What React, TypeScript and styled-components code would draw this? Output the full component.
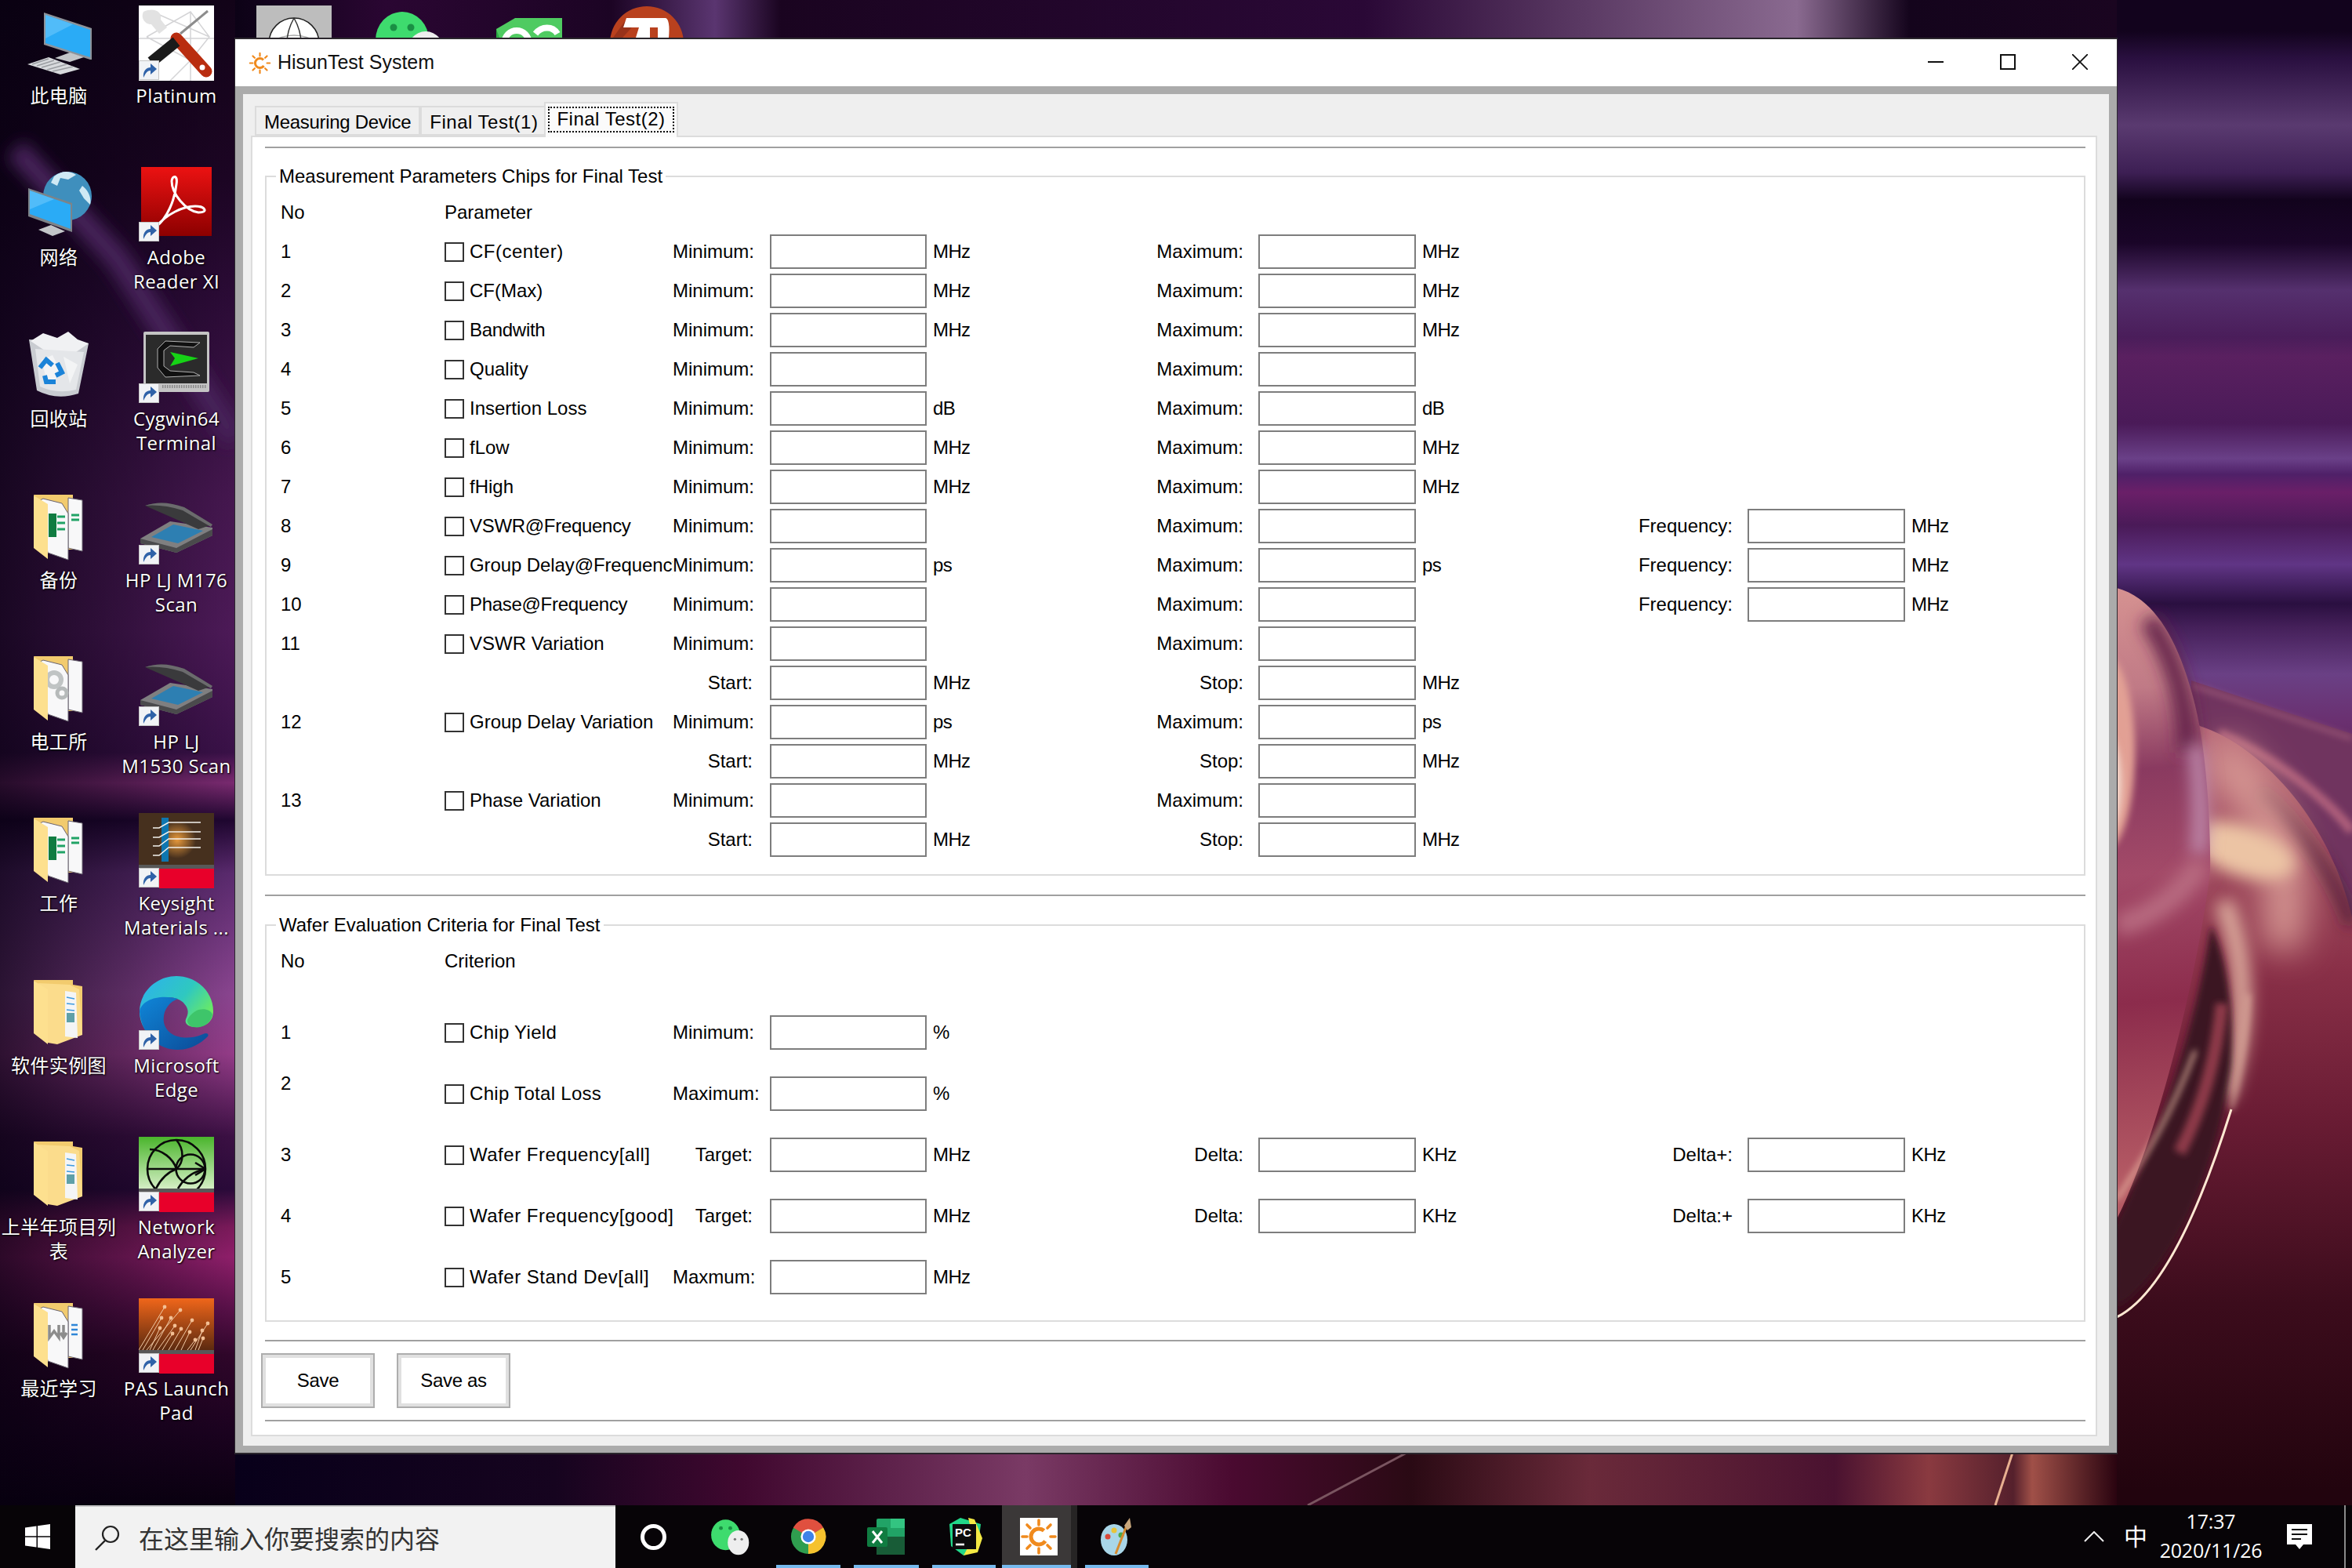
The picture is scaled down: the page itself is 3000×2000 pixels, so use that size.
import React from 'react'
import styled, { createGlobalStyle } from 'styled-components'

const GlobalStyle = createGlobalStyle`
  html, body {
    margin: 0;
    padding: 0;
    background: #000;
    font-family: "Liberation Sans", "Noto Sans CJK SC", sans-serif;
  }
  * { box-sizing: border-box; }
`

const Screen = styled.div`
  position: relative;
  width: 3000px;
  height: 2000px;
  overflow: hidden;
  display: flex;
  flex-direction: column;
`

const WallpaperSvg = styled.svg`
  position: absolute;
  top: 0;
  left: 0;
`

const Desktop = styled.div`
  position: relative;
  height: 1920px;
  display: flex;
  align-items: flex-start;
`

const DesktopColumn = styled.div`
  width: 150px;
  display: flex;
  flex-direction: column;
`

const DesktopCell = styled.div`
  height: 206.1px;
  padding-top: 7px;
  display: flex;
  flex-direction: column;
  align-items: center;
`

const IconBox = styled.div`
  position: relative;
  width: 96px;
  height: 96px;
  svg { display: block; }
`

const ShortcutBadge = styled.div`
  position: absolute;
  left: 0;
  bottom: 1px;
  width: 26px;
  height: 25px;
  background: #f1f3f6;
  border: 1px solid #c4c4c4;
`

const IconLabel = styled.div`
  margin-top: 3px;
  width: 150px;
  text-align: center;
  color: #fff;
  font: 24px/31px "Open Sans", "Noto Sans CJK SC", sans-serif;
  letter-spacing: 0.4px;
  white-space: pre-line;
  text-shadow: 1px 1px 2px #000, 0 0 3px rgba(0, 0, 0, 0.7);
`

const Win = styled.div`
  position: absolute;
  left: 299px;
  top: 48px;
  width: 2402px;
  height: 1807px;
  border: 1px solid #2b272d;
  border-top-width: 2px;
  border-bottom-width: 2px;
  display: flex;
  flex-direction: column;
  color: #000;
  font: 24px/28px "Liberation Sans", sans-serif;
`

const TitleBar = styled.div`
  height: 60px;
  background: #fff;
  display: flex;
  align-items: center;
  padding-left: 17px;
`

const TitleText = styled.span`
  margin-left: 8px;
  margin-top: -2px;
  font-size: 25px;
  color: #111;
`

const WinButtons = styled.div`
  margin-left: auto;
  display: flex;
  margin-right: 1px;
`

const WinButton = styled.div`
  width: 92px;
  height: 60px;
  padding-bottom: 2px;
  display: flex;
  align-items: center;
  justify-content: center;
`

const WinBody = styled.div`
  flex: 1;
  background: #ababab;
  padding: 10px;
  padding-bottom: 9px;
  display: flex;
`

const Content = styled.div`
  flex: 1;
  background: #efefef;
  padding: 10px 15px 12px 10px;
  display: flex;
  flex-direction: column;
`

const TabStrip = styled.div`
  height: 43px;
  padding-left: 5px;
  display: flex;
  align-items: flex-end;
  position: relative;
  z-index: 1;
`

const Tab = styled.div<{ $selected?: boolean; $track?: number }>`
  height: ${(p) => (p.$selected ? '45px' : '38px')};
  margin: ${(p) => (p.$selected ? '0 0 -2px -4px' : '0')};
  padding: ${(p) => (p.$selected ? '4px 3px 6px' : '3px 10px 0')};
  border: 2px solid #dcdcdc;
  border-bottom: ${(p) => (p.$selected ? 'none' : '2px solid #dcdcdc')};
  background: ${(p) => (p.$selected ? '#fbfbfb' : '#efefef')};
  letter-spacing: ${(p) => p.$track ?? 0}px;
  display: flex;
  align-items: center;
  white-space: nowrap;
`

const FocusRect = styled.span`
  border: 2px dotted #000;
  padding: 0 9px 2px;
  height: 33px;
  display: flex;
  align-items: center;
`

const Pane = styled.div`
  flex: 1;
  background: #fff;
  border: 2px solid #dcdcdc;
  padding: 12px 13px 0 16px;
  display: flex;
  flex-direction: column;
`

const Divider = styled.div<{ $mt?: number }>`
  height: 2px;
  background: #a0a0a0;
  margin-top: ${(p) => p.$mt ?? 0}px;
  flex: none;
`

const GroupBox = styled.fieldset<{ $mt: number; $pt: number; $pb: number }>`
  margin: ${(p) => p.$mt}px 0 0;
  padding: ${(p) => p.$pt}px 0 ${(p) => p.$pb}px 18px;
  border: 2px solid #dcdcdc;
  min-width: 0;
`

const GroupTitle = styled.legend`
  margin-left: -6px;
  padding: 0 4px;
  height: 30px;
  line-height: 30px;
  color: #000;
`

const Rows = styled.div<{ $gap: number }>`
  display: flex;
  flex-direction: column;
  gap: ${(p) => p.$gap}px;
`

const Row = styled.div<{ $after?: number }>`
  height: 44px;
  margin-bottom: ${(p) => p.$after ?? 0}px;
  display: grid;
  grid-template-columns: 209px 291px 124px 200px 218px 205px 201px 194px 229px 201px 100px;
  align-items: center;
`

const NoCell = styled.div<{ $raised?: boolean }>`
  align-self: ${(p) => (p.$raised ? 'start' : 'center')};
  line-height: ${(p) => (p.$raised ? '18px' : '28px')};
`

const ParamCell = styled.label<{ $track?: number }>`
  display: flex;
  align-items: center;
  gap: 7px;
  overflow: hidden;
  white-space: nowrap;
  letter-spacing: ${(p) => p.$track ?? 0}px;
`

const CheckBox = styled.span`
  flex: none;
  width: 25px;
  height: 25px;
  border: 2px solid #333;
  background: #fff;
`

const FieldLabel = styled.div<{ $first?: boolean }>`
  text-align: right;
  white-space: nowrap;
  padding-right: ${(p) => (p.$first ? 22 : 19)}px;
`

const FieldInput = styled.input`
  width: 100%;
  height: 44px;
  border: 2px solid #7d7d7d;
  background: #fff;
  padding: 0;
  outline: none;
`

const Unit = styled.div`
  padding-left: 8px;
  letter-spacing: -0.6px;
`

const ActionBar = styled.div`
  margin: 15px 0 15px -5px;
  display: flex;
  gap: 28px;
`

const ActionButton = styled.button`
  width: 145px;
  height: 70px;
  padding: 0;
  background: #fff;
  border: 2px solid #adadad;
  box-shadow: inset 0 0 0 4px #e0e0e0;
  font: 24px "Liberation Sans", sans-serif;
  letter-spacing: -0.3px;
  color: #000;
`

const Taskbar = styled.div`
  position: relative;
  height: 80px;
  background: #070407;
  display: flex;
  align-items: stretch;
  color: #fff;
`

const StartButton = styled.div`
  width: 96px;
  display: flex;
  align-items: center;
  justify-content: center;
`

const SearchBox = styled.div`
  width: 689px;
  background: #f2f2f2;
  border-top: 2px solid #c8c8c8;
  padding-left: 24px;
  display: flex;
  align-items: center;
  gap: 24px;
  color: #333;
  font: 32px "Noto Sans CJK SC", sans-serif;
`

const CortanaCell = styled.div`
  width: 97px;
  display: flex;
  align-items: center;
  justify-content: center;
`

const CortanaRing = styled.span`
  width: 33px;
  height: 33px;
  border: 5px solid #fff;
  border-radius: 50%;
`

const TaskItem = styled.div<{ $width: number; $open?: boolean; $active?: boolean }>`
  position: relative;
  width: ${(p) => p.$width}px;
  padding-left: ${(p) => (p.$active ? 6 : 0)}px;
  display: flex;
  align-items: center;
  justify-content: center;
  background: ${(p) => (p.$active ? '#3b3838' : 'transparent')};
  &::after {
    content: '';
    display: ${(p) => (p.$open ? 'block' : 'none')};
    position: absolute;
    left: ${(p) => (p.$active ? 0 : 9)}px;
    right: ${(p) => (p.$active ? 0 : 8)}px;
    bottom: 0;
    height: 4px;
    background: #76b9ed;
  }
`

const ActiveEdge = styled.div`
  width: 8px;
  background: #262424;
  margin-right: 1px;
`

const Tray = styled.div`
  margin-left: auto;
  display: flex;
  align-items: stretch;
  padding-right: 8px;
`

const TrayCell = styled.div<{ $width: number }>`
  width: ${(p) => p.$width}px;
  display: flex;
  align-items: center;
  justify-content: center;
`

const ImeGlyph = styled.span`
  font: 30px "Noto Sans CJK SC", sans-serif;
  margin-top: -4px;
`

const Clock = styled.div`
  text-align: center;
  font: 25px/37px "Open Sans", sans-serif;
  letter-spacing: -0.2px;
  margin-top: -2px;
`

const TraySeparator = styled.div`
  width: 2px;
  background: #8a8a8a;
  margin-left: 11px;
`

/* ---------- wallpaper ---------- */

const SoftBlur = ({ id, amount }: { id: string; amount: number }) => (
  <filter id={id} filterUnits="userSpaceOnUse" x="0" y="0" width="3000" height="1920">
    <feGaussianBlur stdDeviation={amount} />
  </filter>
)

const Wallpaper = () => (
  <WallpaperSvg width="3000" height="1920" viewBox="0 0 3000 1920">
    <defs>
      <linearGradient id="leftV" gradientUnits="userSpaceOnUse" x1="0" y1="0" x2="0" y2="1920">
        <stop offset="0" stopColor="#120318" />
        <stop offset="0.12" stopColor="#1d0524" />
        <stop offset="0.2" stopColor="#2c0b37" />
        <stop offset="0.33" stopColor="#45174f" />
        <stop offset="0.42" stopColor="#4d1a58" />
        <stop offset="0.5" stopColor="#3a1148" />
        <stop offset="0.52" stopColor="#7a2a70" />
        <stop offset="0.545" stopColor="#1f0630" />
        <stop offset="0.58" stopColor="#5a2a6e" />
        <stop offset="0.66" stopColor="#8a4590" />
        <stop offset="0.7" stopColor="#943c88" />
        <stop offset="0.755" stopColor="#3c1044" />
        <stop offset="0.79" stopColor="#2a0a3a" />
        <stop offset="0.815" stopColor="#7a1a5a" />
        <stop offset="0.835" stopColor="#8f1f6a" />
        <stop offset="0.87" stopColor="#581048" />
        <stop offset="0.9" stopColor="#30062a" />
        <stop offset="0.95" stopColor="#1c0220" />
        <stop offset="1" stopColor="#0a0010" />
      </linearGradient>
      <linearGradient id="leftH" gradientUnits="userSpaceOnUse" x1="0" y1="0" x2="300" y2="0">
        <stop offset="0" stopColor="#06000f" stopOpacity="0.72" />
        <stop offset="0.55" stopColor="#06000f" stopOpacity="0.35" />
        <stop offset="1" stopColor="#06000f" stopOpacity="0" />
      </linearGradient>
      <linearGradient id="topStrip" gradientUnits="userSpaceOnUse" x1="300" y1="0" x2="2700" y2="0">
        <stop offset="0" stopColor="#0c0216" />
        <stop offset="0.08" stopColor="#2a0632" />
        <stop offset="0.2" stopColor="#1c0424" />
        <stop offset="0.255" stopColor="#5a3570" />
        <stop offset="0.29" stopColor="#1a0420" />
        <stop offset="0.6" stopColor="#2a0836" />
        <stop offset="0.83" stopColor="#8a6a90" />
        <stop offset="0.89" stopColor="#14041c" />
        <stop offset="1" stopColor="#1a0520" />
      </linearGradient>
      <linearGradient id="bottomStrip" gradientUnits="userSpaceOnUse" x1="300" y1="0" x2="2700" y2="0">
        <stop offset="0" stopColor="#08001a" />
        <stop offset="0.17" stopColor="#16041f" />
        <stop offset="0.27" stopColor="#40082f" />
        <stop offset="0.42" stopColor="#7a3a65" />
        <stop offset="0.53" stopColor="#4a0a30" />
        <stop offset="0.625" stopColor="#2a0a14" />
        <stop offset="0.72" stopColor="#6a2a3a" />
        <stop offset="0.85" stopColor="#4a1230" />
        <stop offset="0.9" stopColor="#8a3a40" />
        <stop offset="0.945" stopColor="#55202c" />
        <stop offset="0.955" stopColor="#a05048" />
        <stop offset="1" stopColor="#2a0410" />
      </linearGradient>
      <linearGradient id="rightBands" gradientUnits="userSpaceOnUse" x1="0" y1="0" x2="0" y2="1000">
        <stop offset="0" stopColor="#12031d" />
        <stop offset="0.04" stopColor="#12031d" />
        <stop offset="0.075" stopColor="#2a1040" />
        <stop offset="0.16" stopColor="#5a3a70" />
        <stop offset="0.22" stopColor="#3d1f54" />
        <stop offset="0.255" stopColor="#12031d" />
        <stop offset="0.31" stopColor="#1a0528" />
        <stop offset="0.37" stopColor="#55306e" />
        <stop offset="0.43" stopColor="#4a1d5a" />
        <stop offset="0.455" stopColor="#5a2060" />
        <stop offset="0.54" stopColor="#4a1a58" />
        <stop offset="0.585" stopColor="#6a4088" />
        <stop offset="0.605" stopColor="#4f2068" />
        <stop offset="0.628" stopColor="#6a1f68" />
        <stop offset="0.67" stopColor="#4a1a58" />
        <stop offset="0.72" stopColor="#603585" />
        <stop offset="0.77" stopColor="#2a0f40" />
        <stop offset="0.8" stopColor="#45205a" />
        <stop offset="0.86" stopColor="#6a4085" />
        <stop offset="0.92" stopColor="#6a3070" />
        <stop offset="1" stopColor="#572050" />
      </linearGradient>
      <linearGradient id="swirlBase" gradientUnits="userSpaceOnUse" x1="0" y1="950" x2="0" y2="1900">
        <stop offset="0" stopColor="#b86a78" />
        <stop offset="0.3" stopColor="#8a3048" />
        <stop offset="0.5" stopColor="#6a1c34" />
        <stop offset="0.75" stopColor="#3c0c1c" />
        <stop offset="1" stopColor="#22040e" />
      </linearGradient>
      <linearGradient id="torus" gradientUnits="userSpaceOnUse" x1="2700" y1="760" x2="2760" y2="1500">
        <stop offset="0" stopColor="#d49090" />
        <stop offset="0.16" stopColor="#c07a86" />
        <stop offset="0.3" stopColor="#8a3a60" />
        <stop offset="0.48" stopColor="#a34a68" />
        <stop offset="0.7" stopColor="#8c2c4c" />
        <stop offset="1" stopColor="#b45a64" />
      </linearGradient>
      <SoftBlur id="blur4" amount={4} />
      <SoftBlur id="blur10" amount={10} />
      <SoftBlur id="blur22" amount={22} />
      <clipPath id="rightSide">
        <rect x="2700" y="0" width="300" height="1920" />
      </clipPath>
    </defs>

    <rect x="0" y="0" width="3000" height="1920" fill="#0a0010" />

    <rect x="0" y="0" width="300" height="1920" fill="url(#leftV)" />
    <rect x="0" y="0" width="300" height="1920" fill="url(#leftH)" />
    <path d="M20 190 L150 330 L300 560" stroke="#47205a" strokeWidth="30" fill="none" filter="url(#blur10)" />

    <rect x="300" y="0" width="2400" height="50" fill="url(#topStrip)" />

    <rect x="300" y="1850" width="2400" height="70" fill="url(#bottomStrip)" />
    <path d="M1800 1850 L1668 1920" stroke="#7a5560" strokeWidth="3" fill="none" />
    <path d="M2568 1850 L2545 1920" stroke="#e8b090" strokeWidth="3" fill="none" />

    <g clipPath="url(#rightSide)">
      <rect x="2700" y="0" width="300" height="1000" fill="url(#rightBands)" />
      <path d="M2795 868 L3000 936 L3000 1200 C2970 1090 2900 1000 2790 960 Z" fill="#70345f" />
      <path d="M2795 874 L3000 942" stroke="#b46c86" strokeWidth="3" fill="none" filter="url(#blur4)" />
      <path d="M2830 935 C2890 960 2960 1010 3000 1060" stroke="#b0607c" strokeWidth="12" fill="none" filter="url(#blur4)" />
      <path d="M2700 860 L2806 926 C2880 950 2970 1040 3000 1170 L3000 1920 L2700 1920 Z" fill="url(#swirlBase)" />
      <path d="M3000 1180 C2980 1120 2930 1050 2880 1010" stroke="#3f1a30" strokeWidth="12" fill="none" filter="url(#blur10)" />
      <path d="M2826 960 C2900 1020 2925 1100 2910 1210" stroke="#d89a94" strokeWidth="50" fill="none" filter="url(#blur22)" />
      <ellipse cx="2860" cy="1085" rx="70" ry="32" fill="#ecc4a4" filter="url(#blur10)" transform="rotate(18 2860 1085)" />
      <path d="M2836 1150 C2868 1230 2866 1320 2836 1400" stroke="#dcaa9c" strokeWidth="24" fill="none" filter="url(#blur10)" />
      <path d="M2820 1180 C2800 1320 2745 1470 2695 1570 L2700 1668 C2760 1630 2826 1510 2846 1360 C2850 1290 2840 1220 2820 1180Z" fill="#3a1222" filter="url(#blur4)" />
      <path d="M2780 1470 C2806 1420 2826 1360 2834 1280" stroke="#8e3a4a" strokeWidth="16" fill="none" filter="url(#blur4)" />
      <path d="M2700 1680 C2760 1650 2810 1530 2846 1415" stroke="#ffe8d2" strokeWidth="3" fill="none" />
      <path d="M2846 1415 C2856 1380 2866 1320 2868 1268" stroke="#f0c8b0" strokeWidth="3" fill="none" filter="url(#blur4)" />

      <path d="M2700 750 C2745 762 2778 810 2800 900 C2815 960 2820 1060 2819 1110 C2810 1200 2762 1430 2700 1555 Z" fill="url(#torus)" />
      <path d="M2740 790 C2775 840 2790 900 2790 960" stroke="#622048" strokeWidth="24" fill="none" filter="url(#blur10)" />
      <path d="M2800 950 C2808 1000 2808 1060 2804 1090" stroke="#c08cae" strokeWidth="20" fill="none" filter="url(#blur10)" />
      <path d="M2700 1180 C2750 1170 2790 1130 2808 1100" stroke="#b86a80" strokeWidth="28" fill="none" filter="url(#blur10)" />
      <path d="M2700 1530 C2740 1470 2770 1420 2800 1340" stroke="#efc0a8" strokeWidth="4" fill="none" filter="url(#blur4)" />
      <ellipse cx="2685" cy="960" rx="38" ry="125" fill="#e2a094" filter="url(#blur4)" />
      <ellipse cx="2682" cy="1000" rx="24" ry="70" fill="#f2d8cc" filter="url(#blur4)" />
    </g>
  </WallpaperSvg>
)

/* ---------- desktop icons ---------- */

const Shortcut = () => (
  <ShortcutBadge>
    <svg width="24" height="23" viewBox="0 0 24 23">
      <path d="M5 21 C4 12 9 8 14 8 L14 3 L22 10 L14 17 L14 12 C10 12 8 15 5 21Z" fill="#2f62a8" />
    </svg>
  </ShortcutBadge>
)

const PcIcon = () => (
  <svg width="96" height="96" viewBox="0 0 96 96">
    <path d="M29 9 L90 29 L90 69 L88 69 L29 50Z" fill="#8d939a" />
    <path d="M31 12 L88 31 L88 66 L31 48Z" fill="#2aabf6" />
    <path d="M31 12 L66 24 L31 42Z" fill="#6cc8fb" opacity="0.6" />
    <path d="M43 67 L62 60 L80 66 L62 72Z" fill="#c3c6c9" />
    <path d="M8 75 L35 66 L75 81 L50 88Z" fill="#d8dadd" />
    <path d="M14 75 L35 68 M20 77 L42 70 M26 79 L50 72 M33 82 L58 75 M40 84 L66 78" stroke="#9a9da1" strokeWidth="1.5" />
  </svg>
)

const NetworkIcon = () => (
  <svg width="96" height="96" viewBox="0 0 96 96">
    <circle cx="59" cy="37" r="31" fill="#3f8fbd" />
    <path d="M42 12 C52 4 62 5 70 10 L60 16 L50 14 L46 24 L38 20Z M78 24 C86 30 90 40 88 48 L80 40 L74 30Z" fill="#cfe9f4" />
    <path d="M9 27 L65 46 L65 83 L9 63Z" fill="#7d8388" />
    <path d="M11 30 L63 48 L63 79 L11 60Z" fill="#2aabf6" />
    <path d="M11 30 L42 41 L11 54Z" fill="#6cc8fb" opacity="0.6" />
    <path d="M22 80 L38 74 L56 82 L40 88Z" fill="#c3c6c9" />
  </svg>
)

const RecycleIcon = () => (
  <svg width="96" height="96" viewBox="0 0 96 96">
    <path d="M10 14 L86 19 L73 83 Q45 92 20 79Z" fill="#c9ccd1" />
    <path d="M12 16 L28 6 L46 12 L60 4 L72 14 L86 19 L70 30 L30 28Z" fill="#f0f1f3" />
    <path d="M18 26 L80 30 L70 78 Q46 84 24 74Z" fill="#e4e6e9" />
    <path d="M26 40 L40 34 L52 58 L34 72Z M54 36 L72 46 L62 70Z" fill="#f3f4f5" />
    <path d="M24 50 L32 40 L40 47 M46 44 L52 56 L44 60 M44 68 L32 68 L30 60" stroke="#1b83d8" strokeWidth="6" fill="none" />
  </svg>
)

type FolderKind = 'excel' | 'gears' | 'md' | 'docs'

const FolderIcon = ({ kind }: { kind: FolderKind }) => (
  <svg width="96" height="96" viewBox="0 0 96 96">
    <path d="M16 6 L66 6 L66 12 L78 14 L78 76 L34 76Z" fill="#f2cb6e" />
    {kind === 'docs' ? (
      <>
        <path d="M22 10 L62 12 L74 18 L78 76 L46 88 L34 86Z" fill="#fbdc8c" />
        <path d="M56 20 L70 22 L72 80 L56 78Z" fill="#f4f5f6" />
        <path d="M58 28 L68 30 M58 36 L68 37 M58 44 L68 45" stroke="#3d9ae0" strokeWidth="1.5" />
        <rect x="58" y="48" width="10" height="12" fill="#5fa0a8" />
      </>
    ) : (
      <>
        <path d="M60 10 L78 13 L78 78 L60 74Z" fill="#f8f8f9" stroke="#6a6470" strokeWidth="1" />
        <path d="M28 11 L52 17 L60 30 L60 89 L34 80 L22 14Z" fill="#f8f8f9" stroke="#6a6470" strokeWidth="1" />
      </>
    )}
    {kind === 'excel' && (
      <>
        <rect x="35" y="30" width="10" height="30" fill="#107c41" />
        <path d="M46 34 H56 M46 42 H56 M46 50 H56 M64 32 H74 M64 38 H74" stroke="#21a366" strokeWidth="3" />
      </>
    )}
    {kind === 'gears' && (
      <>
        <circle cx="42" cy="36" r="9" fill="none" stroke="#c0c4c4" strokeWidth="6" />
        <circle cx="52" cy="53" r="6" fill="none" stroke="#b6baba" strokeWidth="5" />
      </>
    )}
    {kind === 'md' && (
      <>
        <path d="M36 34 V50 L42 42 L48 50 V34 M54 34 V48 M50 44 L54 50 L58 44" stroke="#8c8c8c" strokeWidth="3.5" fill="none" />
        <path d="M64 34 H72 M64 40 H72 M64 46 H72" stroke="#2f86d8" strokeWidth="2.5" />
      </>
    )}
    <path d="M16 7 L34 18 L34 88 L16 74Z" fill="#fde08f" />
  </svg>
)

const PlatinumIcon = () => (
  <svg width="96" height="96" viewBox="0 0 96 96">
    <rect width="96" height="96" fill="#fff" />
    <path d="M10 40 L66 8 L90 40 L66 70 L10 40 M66 8 L66 96 M0 42 H96 M40 96 L66 70 M22 10 L90 40" stroke="#d4d4d6" strokeWidth="1.5" fill="none" />
    <path d="M6 8 C20 2 30 8 28 18 L36 28 L26 36 L16 24 C8 24 2 16 6 8Z" fill="#e2e2e2" />
    <path d="M53 36 L88 7" stroke="#8c8c8c" strokeWidth="3" />
    <path d="M48 42 L86 84" stroke="#b92d10" strokeWidth="15" strokeLinecap="round" />
    <circle cx="81" cy="79" r="3.5" fill="#fff" />
    <path d="M48 46 L16 72" stroke="#1b1b1b" strokeWidth="14" />
  </svg>
)

const AdobeIcon = () => (
  <svg width="96" height="96" viewBox="0 0 96 96">
    <defs>
      <linearGradient id="adobeRed" x1="0" y1="0" x2="0" y2="1">
        <stop offset="0" stopColor="#ec1212" />
        <stop offset="1" stopColor="#8c0000" />
      </linearGradient>
    </defs>
    <rect x="3" y="0" width="90" height="88" fill="url(#adobeRed)" />
    <path d="M22 76 C36 66 46 42 48 22 C50 10 43 10 42 18 C42 34 60 56 76 58 C90 58 84 50 72 50 C56 50 36 60 22 76Z" fill="none" stroke="#fff" strokeWidth="3" />
  </svg>
)

const CygwinIcon = () => (
  <svg width="96" height="96" viewBox="0 0 96 96">
    <rect x="6" y="4" width="84" height="77" rx="2" fill="#c4c4c4" />
    <rect x="9" y="8" width="78" height="62" fill="#2b2b2b" />
    <path d="M78 18 L34 16 L24 26 L24 50 L34 62 L78 60 L70 56 L40 54 L32 48 L32 28 L40 22 L70 24Z" fill="#111" stroke="#b0b0b0" strokeWidth="1" />
    <path d="M40 30 L76 38 L40 48 L46 38Z" fill="#16d316" />
    <path d="M30 74 H86" stroke="#8a8a8a" strokeWidth="4" strokeDasharray="1.5 1.5" />
  </svg>
)

const ScannerIcon = () => (
  <svg width="96" height="96" viewBox="0 0 96 96">
    <path d="M2 62 L40 40 L94 48 L94 58 L48 80 L2 68Z" fill="#7f7f80" />
    <path d="M2 62 L48 74 L94 50 L94 58 L48 80 L2 68Z" fill="#4a4a4c" />
    <path d="M16 60 L44 44 L82 52 L50 68Z" fill="#2d7fb2" />
    <path d="M8 20 Q30 12 58 22 L94 44 L76 50 L40 34Z" fill="#3a3a3c" />
    <path d="M8 20 Q30 12 58 22 L94 44 L92 47 L56 26 Q30 18 8 20Z" fill="#6b6b6d" />
  </svg>
)

const AppTile = ({ children, top }: { children: React.ReactNode; top: React.ReactNode }) => (
  <svg width="96" height="96" viewBox="0 0 96 96">
    {top}
    {children}
    <rect y="66" width="96" height="5" fill="#585858" />
    <rect x="26" y="71" width="70" height="25" fill="#e8002a" />
  </svg>
)

const KeysightIcon = () => (
  <AppTile
    top={
      <>
        <defs>
          <radialGradient id="ksGlow" cx="0.5" cy="0.5" r="0.5">
            <stop offset="0" stopColor="#e89a3c" />
            <stop offset="1" stopColor="#e89a3c" stopOpacity="0" />
          </radialGradient>
        </defs>
        <rect width="96" height="66" fill="#46301e" />
        <circle cx="49" cy="34" r="24" fill="url(#ksGlow)" />
      </>
    }
  >
    <rect x="29" y="6" width="9" height="56" fill="#0e76b0" />
    <path d="M18 19 H26 L38 12 H79 M18 31 H26 L38 24 H79 M18 42 H26 L38 33 H79 M18 54 H26 L38 44 H79" stroke="#f4f2ee" strokeWidth="1.5" fill="none" />
  </AppTile>
)

const EdgeIcon = () => (
  <svg width="96" height="96" viewBox="0 0 96 96">
    <defs>
      <linearGradient id="edgeTop" x1="0" y1="0" x2="1" y2="0.6">
        <stop offset="0" stopColor="#2cb0f0" />
        <stop offset="0.6" stopColor="#2fc8c0" />
        <stop offset="1" stopColor="#6ceb62" />
      </linearGradient>
      <linearGradient id="edgeLow" x1="0" y1="0" x2="1" y2="1">
        <stop offset="0" stopColor="#0f86d8" />
        <stop offset="1" stopColor="#0c4a96" />
      </linearGradient>
    </defs>
    <path d="M48 1 C74 1 95 21 95 46 C95 60 84 66 72 66 C64 66 58 62 60 56 C64 48 64 42 56 34 C46 26 30 26 20 36 C8 50 6 62 10 72 C4 64 1 56 1 46 C1 22 22 1 48 1Z" fill="url(#edgeTop)" />
    <path d="M1 46 C4 78 26 95 50 95 C62 95 76 90 88 78 C90 74 86 73 82 75 C62 84 36 80 32 60 C30 46 38 34 50 30 C28 24 4 30 1 46Z" fill="url(#edgeLow)" />
    <path d="M70 66 C80 68 92 62 94 50 C92 44 84 42 76 44 C70 46 62 54 62 58 C62 62 66 66 70 66Z" fill="#3ec56a" />
  </svg>
)

const AnalyzerIcon = () => (
  <AppTile
    top={
      <>
        <defs>
          <linearGradient id="naGreen" x1="0" y1="0" x2="0" y2="1">
            <stop offset="0" stopColor="#4ab52c" />
            <stop offset="1" stopColor="#d4eec4" />
          </linearGradient>
          <clipPath id="naClip">
            <rect width="96" height="66" />
          </clipPath>
        </defs>
        <rect width="96" height="66" fill="url(#naGreen)" />
      </>
    }
  >
    <g clipPath="url(#naClip)" stroke="#0a0a0a" strokeWidth="2.6" fill="none">
      <circle cx="48" cy="41" r="37" />
      <circle cx="66" cy="41" r="18.5" />
      <path d="M11 41 H85" />
      <path d="M48 4 C58 16 58 32 48 41 M85 41 L72 33 M85 41 L72 49" />
      <path d="M14 16 C30 16 44 28 48 41 M22 66 C30 50 40 44 48 41 M85 41 C70 44 58 52 50 66" />
    </g>
  </AppTile>
)

const PasIcon = () => {
  const pins: [number, number, number, number][] = [
    [0, 66, 33, 11], [10, 66, 53, 15], [5, 66, 29, 25], [18, 66, 41, 25],
    [14, 66, 27, 38], [24, 66, 46, 35], [30, 66, 43, 45], [38, 66, 54, 39],
    [46, 66, 68, 28], [54, 66, 65, 43], [62, 66, 72, 53], [66, 66, 88, 32],
    [72, 66, 81, 41], [76, 66, 82, 51],
  ]
  return (
    <AppTile
      top={
        <>
          <defs>
            <linearGradient id="pasBg" x1="0" y1="0" x2="0" y2="1">
              <stop offset="0" stopColor="#f0661a" />
              <stop offset="1" stopColor="#5c2a10" />
            </linearGradient>
          </defs>
          <rect width="96" height="66" fill="url(#pasBg)" />
        </>
      }
    >
      {pins.map(([x1, y1, x2, y2]) => (
        <g key={`${x2}-${y2}`}>
          <line x1={x1} y1={y1} x2={x2} y2={y2} stroke="#f0c8a4" strokeWidth="1" />
          <circle cx={x2} cy={y2} r="2.4" fill="#f3bf94" />
        </g>
      ))}
    </AppTile>
  )
}

const GlobePeek = () => (
  <svg width="96" height="96" viewBox="0 0 96 96">
    <rect width="96" height="96" fill="#bdbdbd" />
    <circle cx="48" cy="48" r="32" fill="#fff" stroke="#222" strokeWidth="1.5" />
    <path d="M16 48 Q48 28 80 48" stroke="#aaa" strokeWidth="1.5" fill="none" />
    <path d="M48 16 Q30 48 48 80 M48 16 Q66 48 48 80" stroke="#333" strokeWidth="1.5" fill="none" />
  </svg>
)

const WeChatGlyph = ({ size }: { size: number }) => (
  <svg width={size} height={size} viewBox="0 0 96 96">
    <ellipse cx="36" cy="44" rx="34" ry="36" fill="#3edb6e" />
    <circle cx="25" cy="28" r="4.5" fill="#1a8f44" />
    <circle cx="47" cy="28" r="4.5" fill="#1a8f44" />
    <ellipse cx="66" cy="62" rx="25" ry="29" fill="#eee" />
    <circle cx="58" cy="54" r="3" fill="#777" />
    <circle cx="74" cy="54" r="3" fill="#777" />
  </svg>
)

const QcPeek = () => (
  <svg width="96" height="96" viewBox="0 0 96 96">
    <path d="M6 30 L30 16 L90 16 L90 96 L6 96Z" fill="#4fcb61" />
    <path d="M6 30 L6 96 L30 96Z" fill="#2cab44" />
    <path d="M16 50 C16 26 48 26 48 50 M56 36 C64 26 78 26 84 36" stroke="#fff" strokeWidth="8" fill="none" />
  </svg>
)

const RedTPeek = () => (
  <svg width="96" height="96" viewBox="0 0 96 96">
    <circle cx="48" cy="48" r="47" fill="#b9411e" />
    <path d="M0 60 L36 20 H20 L0 48Z" fill="#98321a" />
    <path d="M22 16 H72 Q78 18 76 41 H62 V28 H52 V41 H34 L38 28 H18Z" fill="#fff" />
  </svg>
)

const SunIcon = ({ size, tile }: { size: number; tile?: boolean }) => (
  <svg width={size} height={size} viewBox="0 0 48 48">
    {tile && <rect width="48" height="48" fill="#fff" />}
    <g stroke="#f08a1d" strokeWidth="3.6" strokeLinecap="round">
      <path d="M24 3 V9 M24 39 V45 M3 24 H9 M39 24 H45 M9 9 L13 13 M35 35 L39 39 M9 39 L13 35 M35 13 L39 9" />
    </g>
    <circle cx="24" cy="24" r="10" fill="#fff" stroke="#f08a1d" strokeWidth="5" strokeDasharray="48 15" strokeDashoffset="-6" />
  </svg>
)

type DesktopEntry = { label?: string; icon: React.ReactNode; shortcut?: boolean }

const desktopColumns: DesktopEntry[][] = [
  [
    { label: '此电脑', icon: <PcIcon /> },
    { label: '网络', icon: <NetworkIcon /> },
    { label: '回收站', icon: <RecycleIcon /> },
    { label: '备份', icon: <FolderIcon kind="excel" /> },
    { label: '电工所', icon: <FolderIcon kind="gears" /> },
    { label: '工作', icon: <FolderIcon kind="excel" /> },
    { label: '软件实例图', icon: <FolderIcon kind="docs" /> },
    { label: '上半年项目列表', icon: <FolderIcon kind="docs" /> },
    { label: '最近学习', icon: <FolderIcon kind="md" /> },
  ],
  [
    { label: 'Platinum', icon: <PlatinumIcon />, shortcut: true },
    { label: 'Adobe\nReader XI', icon: <AdobeIcon />, shortcut: true },
    { label: 'Cygwin64\nTerminal', icon: <CygwinIcon />, shortcut: true },
    { label: 'HP LJ M176\nScan', icon: <ScannerIcon />, shortcut: true },
    { label: 'HP LJ\nM1530 Scan', icon: <ScannerIcon />, shortcut: true },
    { label: 'Keysight\nMaterials ...', icon: <KeysightIcon />, shortcut: true },
    { label: 'Microsoft\nEdge', icon: <EdgeIcon />, shortcut: true },
    { label: 'Network\nAnalyzer', icon: <AnalyzerIcon />, shortcut: true },
    { label: 'PAS Launch\nPad', icon: <PasIcon />, shortcut: true },
  ],
  [{ icon: <GlobePeek /> }],
  [{ icon: <WeChatGlyph size={96} /> }],
  [{ icon: <QcPeek /> }],
  [{ icon: <RedTPeek /> }],
]

/* ---------- form data ---------- */

type Field = [string, string]
type FormRow = { no?: string; name?: string; fields: Field[]; raised?: boolean; track?: number }

const range = (unit: string): Field[] => [['Minimum:', unit], ['Maximum:', unit]]
const sweep: Field[] = [['Start:', 'MHz'], ['Stop:', 'MHz']]
const freq: Field = ['Frequency:', 'MHz']

const parameterRows: FormRow[] = [
  { no: '1', name: 'CF(center)', fields: range('MHz'), track: 0.5 },
  { no: '2', name: 'CF(Max)', fields: range('MHz') },
  { no: '3', name: 'Bandwith', fields: range('MHz'), track: -0.3 },
  { no: '4', name: 'Quality', fields: range('') },
  { no: '5', name: 'Insertion Loss', fields: range('dB') },
  { no: '6', name: 'fLow', fields: range('MHz') },
  { no: '7', name: 'fHigh', fields: range('MHz') },
  { no: '8', name: 'VSWR@Frequency', fields: [...range(''), freq], track: -0.3 },
  { no: '9', name: 'Group Delay@Frequency', fields: [...range('ps'), freq], track: -0.1 },
  { no: '10', name: 'Phase@Frequency', fields: [...range(''), freq], track: -0.3 },
  { no: '11', name: 'VSWR Variation', fields: range('') },
  { fields: sweep },
  { no: '12', name: 'Group Delay Variation', fields: range('ps') },
  { fields: sweep },
  { no: '13', name: 'Phase Variation', fields: range('') },
  { fields: sweep },
]

const criterionRows: FormRow[] = [
  { no: '1', name: 'Chip Yield', fields: [['Minimum:', '%']], track: 0.3 },
  { no: '2', name: 'Chip Total Loss', fields: [['Maximum:', '%']], raised: true, track: 0.3 },
  { no: '3', name: 'Wafer Frequency[all]', fields: [['Target:', 'MHz'], ['Delta:', 'KHz'], ['Delta+:', 'KHz']], track: 0.5 },
  { no: '4', name: 'Wafer Frequency[good]', fields: [['Target:', 'MHz'], ['Delta:', 'KHz'], ['Delta:+', 'KHz']], track: 0.5 },
  { no: '5', name: 'Wafer Stand Dev[all]', fields: [['Maxmum:', 'MHz']], track: 0.5 },
]

const FormLine = ({ row }: { row: FormRow }) => (
  <Row>
    <NoCell $raised={row.raised}>{row.no}</NoCell>
    {row.name ? (
      <ParamCell $track={row.track}>
        <CheckBox />
        {row.name}
      </ParamCell>
    ) : (
      <span />
    )}
    {row.fields.map(([label, unit], i) => (
      <React.Fragment key={label + i}>
        <FieldLabel $first={i === 0}>{label}</FieldLabel>
        <FieldInput readOnly />
        <Unit>{unit}</Unit>
      </React.Fragment>
    ))}
  </Row>
)

export default function App() {
  return (
    <Screen>
      <GlobalStyle />
      <Wallpaper />

      <Desktop>
        {desktopColumns.map((col, c) => (
          <DesktopColumn key={c}>
            {col.map((item, i) => (
              <DesktopCell key={i}>
                <IconBox>
                  {item.icon}
                  {item.shortcut && <Shortcut />}
                </IconBox>
                {item.label && <IconLabel>{item.label}</IconLabel>}
              </DesktopCell>
            ))}
          </DesktopColumn>
        ))}

        <Win>
          <TitleBar>
            <SunIcon size={29} />
            <TitleText>HisunTest System</TitleText>
            <WinButtons>
              <WinButton>
                <svg width="20" height="20" viewBox="0 0 20 20">
                  <path d="M0 10 H20" stroke="#111" strokeWidth="2" />
                </svg>
              </WinButton>
              <WinButton>
                <svg width="20" height="20" viewBox="0 0 20 20">
                  <rect x="1" y="1" width="18" height="18" fill="none" stroke="#111" strokeWidth="2" />
                </svg>
              </WinButton>
              <WinButton>
                <svg width="20" height="20" viewBox="0 0 20 20">
                  <path d="M0 0 L20 20 M20 0 L0 20" stroke="#111" strokeWidth="1.8" />
                </svg>
              </WinButton>
            </WinButtons>
          </TitleBar>

          <WinBody>
            <Content>
              <TabStrip>
                <Tab $track={-0.3}>Measuring Device</Tab>
                <Tab $track={0.5}>Final Test(1)</Tab>
                <Tab $selected $track={0.5}>
                  <FocusRect>Final Test(2)</FocusRect>
                </Tab>
              </TabStrip>

              <Pane>
                <Divider />

                <GroupBox $mt={21} $pt={9} $pb={22}>
                  <GroupTitle>Measurement Parameters Chips for Final Test</GroupTitle>
                  <Rows $gap={6}>
                    <Row>
                      <NoCell>No</NoCell>
                      <div>Parameter</div>
                    </Row>
                    {parameterRows.map((row, i) => (
                      <FormLine key={i} row={row} />
                    ))}
                  </Rows>
                </GroupBox>

                <Divider $mt={24} />

                <GroupBox $mt={22} $pt={9} $pb={33}>
                  <GroupTitle>Wafer Evaluation Criteria for Final Test</GroupTitle>
                  <Rows $gap={34}>
                    <Row $after={13}>
                      <NoCell>No</NoCell>
                      <div>Criterion</div>
                    </Row>
                    {criterionRows.map((row) => (
                      <FormLine key={row.no} row={row} />
                    ))}
                  </Rows>
                </GroupBox>

                <Divider $mt={23} />
                <ActionBar>
                  <ActionButton>Save</ActionButton>
                  <ActionButton>Save as</ActionButton>
                </ActionBar>
                <Divider />
              </Pane>
            </Content>
          </WinBody>
        </Win>
      </Desktop>

      <Taskbar>
        <StartButton>
          <svg width="32" height="32" viewBox="0 0 32 32">
            <path d="M0 4.5 L14.5 2.4 V15.3 H0Z M16 2.2 L32 0 V15.3 H16Z M0 16.8 H14.5 V29.6 L0 27.5Z M16 16.8 H32 V32 L16 29.8Z" fill="#fff" />
          </svg>
        </StartButton>
        <SearchBox>
          <svg width="33" height="33" viewBox="0 0 33 33">
            <circle cx="21" cy="12" r="10" fill="none" stroke="#222" strokeWidth="2.2" />
            <path d="M14 20 L2 32" stroke="#222" strokeWidth="2.4" />
          </svg>
          在这里输入你要搜索的内容
        </SearchBox>
        <CortanaCell>
          <CortanaRing />
        </CortanaCell>
        <TaskItem $width={99}>
          <WeChatGlyph size={52} />
        </TaskItem>
        <TaskItem $width={99} $open>
          <svg width="46" height="46" viewBox="0 0 48 48">
            <circle cx="24" cy="24" r="23" fill="#2f9e4f" />
            <path d="M24 24 L4 12 A23 23 0 0 1 44 12Z" fill="#e0503f" />
            <path d="M24 24 L44 12 A23 23 0 0 1 24 47Z" fill="#f6c22e" />
            <circle cx="24" cy="24" r="10" fill="#fff" />
            <circle cx="24" cy="24" r="7.5" fill="#3f83e8" />
          </svg>
        </TaskItem>
        <TaskItem $width={100} $open>
          <svg width="48" height="46" viewBox="0 0 48 46">
            <rect x="12" y="0" width="36" height="46" rx="2" fill="#21a366" />
            <rect x="30" y="0" width="18" height="12" fill="#33c481" />
            <rect x="12" y="23" width="36" height="23" fill="#185c37" />
            <rect x="0" y="11" width="26" height="25" rx="2" fill="#107c41" />
            <path d="M7 16 L19 31 M19 16 L7 31" stroke="#fff" strokeWidth="3" />
          </svg>
        </TaskItem>
        <TaskItem $width={98} $open>
          <svg width="48" height="48" viewBox="0 0 48 48">
            <path d="M6 8 L20 0 L46 8 L42 40 L24 48 L8 36Z" fill="#21d789" />
            <path d="M30 0 L38 2 L48 26 L42 44 L24 48 L36 26Z" fill="#f4ea44" />
            <rect x="10" y="8" width="30" height="32" fill="#0c0c0c" />
            <path d="M14 34 H25" stroke="#fff" strokeWidth="2.6" />
            <text x="13" y="24" fontFamily="Liberation Sans" fontWeight="700" fontSize="15" fill="#fff">PC</text>
          </svg>
        </TaskItem>
        <TaskItem $width={88} $open $active>
          <SunIcon size={48} tile />
        </TaskItem>
        <ActiveEdge />
        <TaskItem $width={98} $open>
          <svg width="46" height="48" viewBox="0 0 46 48">
            <ellipse cx="20" cy="28" rx="17" ry="20" fill="#a9d6e8" />
            <circle cx="12" cy="24" r="3.5" fill="#d84a3a" />
            <circle cx="20" cy="16" r="3.5" fill="#e8c43a" />
            <circle cx="29" cy="22" r="3.5" fill="#4aa84a" />
            <path d="M22 46 L36 10" stroke="#d68a2e" strokeWidth="3" />
            <path d="M33 10 L40 0 L42 12 L37 16Z" fill="#c8a67c" />
          </svg>
        </TaskItem>

        <Tray>
          <TrayCell $width={48}>
            <svg width="26" height="14" viewBox="0 0 26 14">
              <path d="M1 13 L13 1 L25 13" fill="none" stroke="#eee" strokeWidth="2" />
            </svg>
          </TrayCell>
          <TrayCell $width={58}>
            <ImeGlyph>中</ImeGlyph>
          </TrayCell>
          <TrayCell $width={134}>
            <Clock>
              17:37
              <br />
              2020/11/26
            </Clock>
          </TrayCell>
          <TrayCell $width={92}>
            <svg width="32" height="32" viewBox="0 0 32 32">
              <path d="M0 0 H32 V26 H21 L16 32 L11 26 H0Z" fill="#fff" />
              <path d="M6 7 H26 M6 13 H26 M6 19 H18" stroke="#111" strokeWidth="2" />
            </svg>
          </TrayCell>
          <TraySeparator />
        </Tray>
      </Taskbar>
    </Screen>
  )
}
